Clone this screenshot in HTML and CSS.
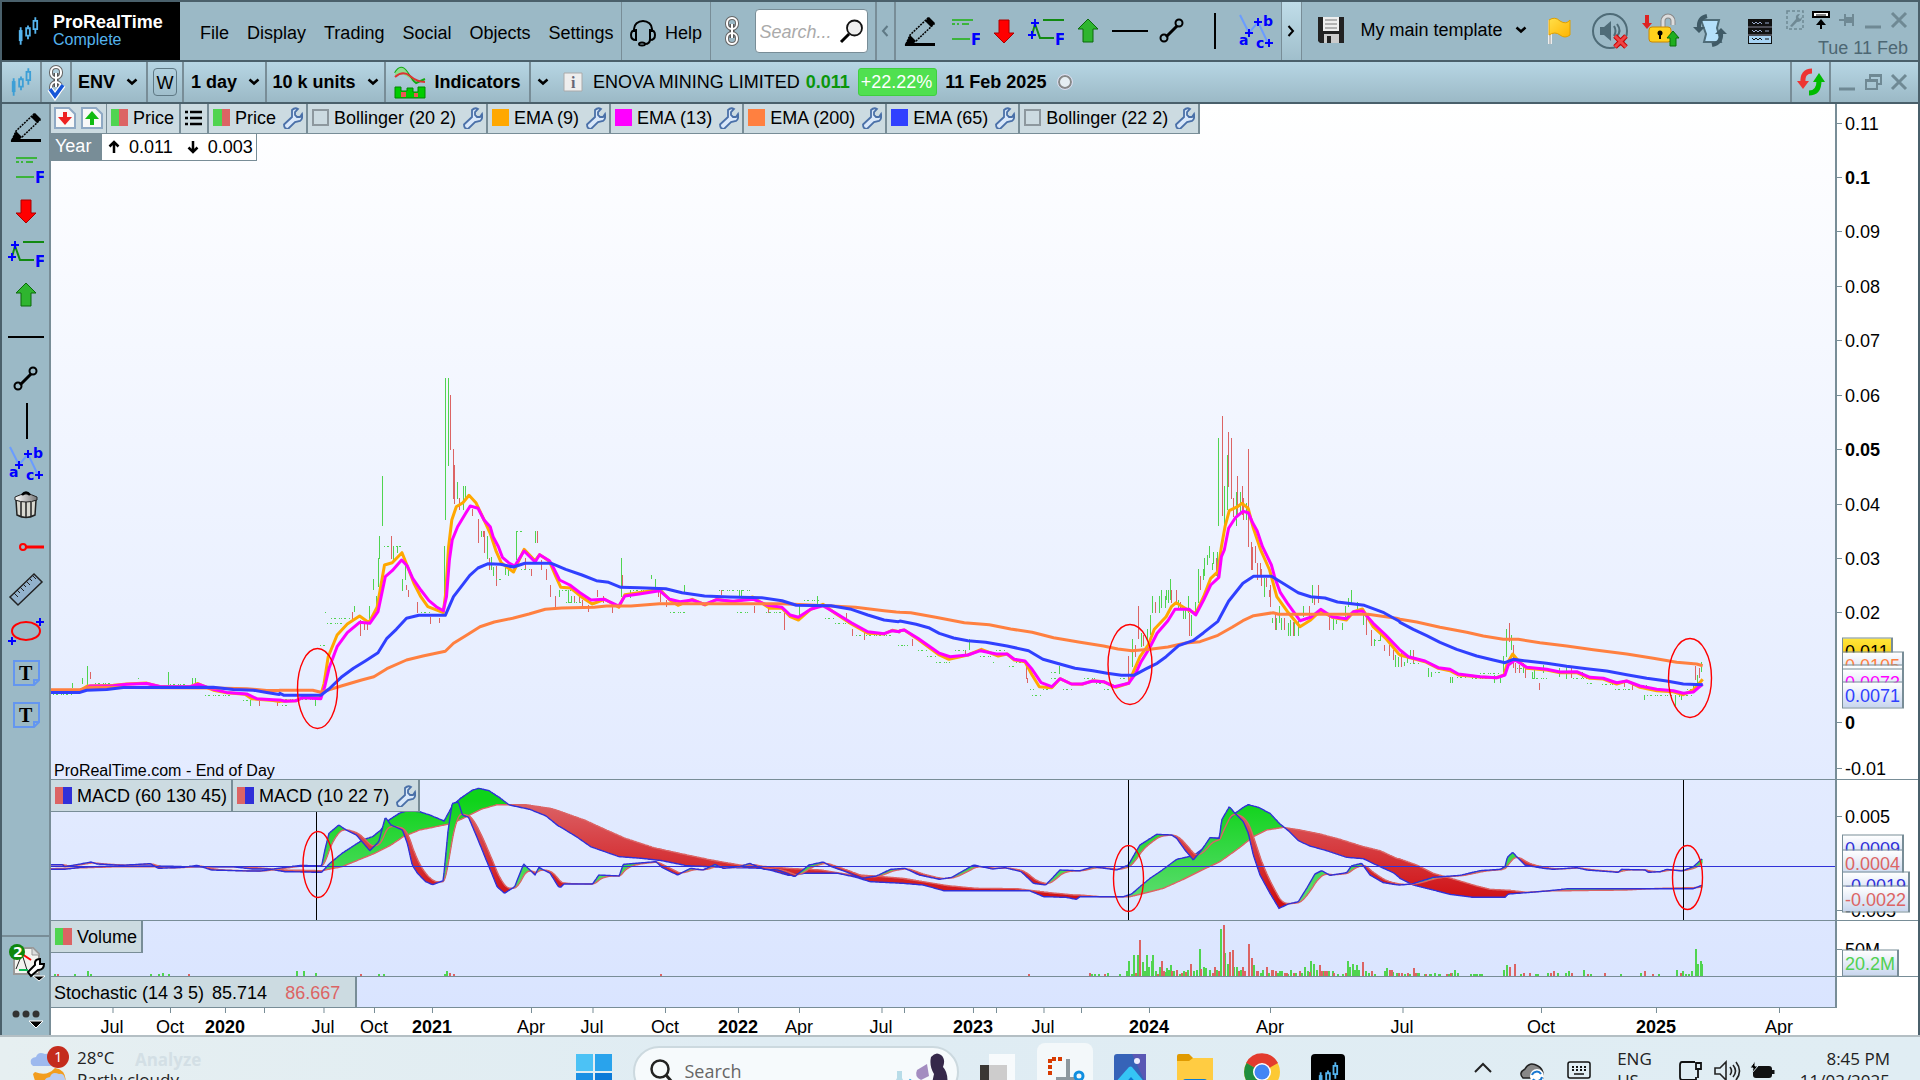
FILE: index.html
```html
<!DOCTYPE html>
<html lang="en">
<head>
<meta charset="utf-8">
<title>ProRealTime Complete</title>
<link rel="stylesheet" href="styles.css">
</head>
<body>
<svg class="sprite" aria-hidden="true">
  <defs>
    <linearGradient id="gSteel" x1="0" x2="1"><stop offset="0" stop-color="#fff"/><stop offset="1" stop-color="#777"/></linearGradient>
    <linearGradient id="gFlag" x1="0" x2="1" y2="1"><stop offset="0" stop-color="#ffe04a"/><stop offset="1" stop-color="#ffb400"/></linearGradient>
  </defs>
  <symbol id="candles" viewBox="0 0 24 30"><path d="M4 11v19M12 9v15M20 0v18" stroke="currentColor" stroke-width="2"/><path d="M2 14h4v12H2z" fill="currentColor"/><path d="M10 12h4v8h-4zM18 4h4v9h-4z" fill="var(--hole)" stroke="currentColor" stroke-width="2"/></symbol>
  <symbol id="pencil" viewBox="0 0 36 36"><path d="M4 31 8 22 26 5l6 6-18 17z" fill="none" stroke="#000" stroke-dasharray="2 1" stroke-width="1.5"/><path d="m23 8 4-4 6 6-4 4zM3 32l5-10 6 6-2 2h21v3H3z"/></symbol>
  <symbol id="fibo" viewBox="0 0 36 36"><path d="M8 7h21M8 11h3M18 11h7M13 11h2M8 26h18" stroke="#3cb43c" stroke-width="2"/><text x="27" y="32" class="glyph">F</text></symbol>
  <symbol id="arrow-down" viewBox="0 0 36 36"><path d="M13 7h10v13h5l-10 10L8 20h5z" fill="#f00" stroke="#a00"/></symbol>
  <symbol id="fibo-ext" viewBox="0 0 36 36"><path d="M15 7h21M4 22l3-11 5 14h14" fill="none" stroke="#128a12" stroke-width="2"/><path d="M3 10h8M7 6v8M0 22h8M4 18v8" stroke="#00f" stroke-width="2"/><text x="27" y="32" class="glyph">F</text></symbol>
  <symbol id="arrow-up" viewBox="0 0 36 36"><path d="M13 29h10V16h5L18 6 8 16h5z" fill="#2fb52f" stroke="#0a6a0a"/></symbol>
  <symbol id="hline" viewBox="0 0 36 36"><path d="M0 18h36" stroke="#000" stroke-width="2"/></symbol>
  <symbol id="segment" viewBox="0 0 36 36"><path d="m12 24 11-11" stroke="#000" stroke-width="3"/><circle cx="10" cy="25" r="3.5" fill="none" stroke="#000" stroke-width="2"/><circle cx="25" cy="10" r="3.5" fill="none" stroke="#000" stroke-width="2"/></symbol>
  <symbol id="vline" viewBox="0 0 36 36"><path d="M19 0v36" stroke="#000" stroke-width="2"/></symbol>
  <symbol id="waves" viewBox="0 0 36 36"><path d="m2 2 9 18 9-11 10 21" fill="none" stroke="#6a9cff" stroke-width="2"/><path d="M7 20h8M11 16v8M16 9h8M20 5v8M27 30h8M31 26v8" stroke="#00f" stroke-width="2"/><text x="1" y="32" class="glyph light">a</text><text x="25" y="13" class="glyph light">b</text><text x="18" y="35" class="glyph light">c</text></symbol>
  <symbol id="trash" viewBox="0 0 36 36"><path d="M8 13h20l-1 15q-9 5-18 0z" fill="#d8d8d0" stroke="#222" stroke-width="1.5"/><path d="M13 15v14M18 15v15M23 15v14" stroke="#222" stroke-width="1.5"/><path d="M7 10q11-6 22 0v3q-11 4-22 0z" fill="url(#gSteel)" stroke="#222"/><path d="M14 8q4-5 8 0" fill="none" stroke="#000" stroke-width="2.5"/></symbol>
  <symbol id="ray" viewBox="0 0 36 36"><path d="M18 18h18" stroke="#f00" stroke-width="3"/><circle cx="15" cy="18" r="3" fill="none" stroke="#f00" stroke-width="2"/></symbol>
  <symbol id="ruler" viewBox="0 0 36 36"><path d="M2 26 26 3l8 8-24 23z" fill="#92b2cc" stroke="#222" stroke-width="1.5"/><path d="m6 22 4 4m-1-7 3 3m0-6 4 4m-1-7 3 3m0-6 4 4m-1-7 3 3m0-6 4 4" stroke="#222"/></symbol>
  <symbol id="oval" viewBox="0 0 36 36"><ellipse cx="18" cy="18" rx="14" ry="9" fill="none" stroke="#f00" stroke-width="2"/><path d="M28 9h8M32 5v8M0 28h8M4 24v8" stroke="#00f" stroke-width="2"/></symbol>
  <symbol id="note" viewBox="0 0 36 36"><path d="M6 6h25v19l-5 5H6z" fill="none" stroke="#6496f0" stroke-width="2"/><path d="M26 30v-5h5" fill="none" stroke="#6496f0" stroke-width="2"/><text x="11" y="25" class="serif">T</text></symbol>
  <symbol id="wrench" viewBox="0 0 20 22"><path d="M1 17.500 9 10V3q3-3 6-1l-3 3v3l2 2h3l2-3q1 5-2 7l-5 1-7 7q-4 0-4-4.500z" fill="#d9e8fa" stroke="#4a70a8" stroke-width="1.800"/></symbol>
  <symbol id="chev" viewBox="0 0 12 8"><path d="m1.500 1.500 4.500 4 4.500-4" fill="none" stroke="#000" stroke-width="2.500"/></symbol>
  <symbol id="link" viewBox="0 0 16 30"><g fill="none"><rect x="3" y="2" width="10" height="11" rx="5" stroke="#666" stroke-width="4"/><rect x="3" y="17" width="10" height="11" rx="5" stroke="#666" stroke-width="4"/><path d="M8 8v14" stroke="#555" stroke-width="5"/><rect x="3" y="2" width="10" height="11" rx="5" stroke="#fff" stroke-width="2"/><rect x="3" y="17" width="10" height="11" rx="5" stroke="#fff" stroke-width="2"/><path d="M8 8v14" stroke="#fff" stroke-width="2"/></g></symbol>
  <symbol id="min" viewBox="0 0 18 20"><path d="M1 17h16" stroke="currentColor" stroke-width="3"/></symbol>
  <symbol id="close" viewBox="0 0 18 20"><path d="m2 3 14 14M16 3 2 17" stroke="currentColor" stroke-width="3"/></symbol>
</svg>

<header class="topbar">
  <div class="brand">
    <svg class="brand-mark"><use href="#candles"/></svg>
    <div><strong>ProRealTime</strong><span>Complete</span></div>
  </div>
  <nav class="menu">
    <button>File</button><button>Display</button><button>Trading</button><button>Social</button><button>Objects</button><button>Settings</button>
  </nav>
  <button class="help"><svg width="28" height="28" viewBox="0 0 28 28" fill="none" stroke="#000" stroke-width="2"><path d="M5 13V10a9 8 0 0 1 18 0v3M21 20q0 5-5 5"/><path d="M7 11q-5 0-5 5t5 5zM21 11q5 0 5 5t-5 5z"/><ellipse cx="13" cy="25" rx="3" ry="1.500"/></svg>Help</button>
  <div class="finder">
    <button aria-label="Link windows"><svg width="16" height="30"><use href="#link"/></svg></button>
    <label class="search"><input type="text" placeholder="Search..." aria-label="Search"><svg width="24" height="24" viewBox="0 0 24 24"><path d="m9 15-8 8" stroke="#000" stroke-width="3"/><circle cx="14.500" cy="9" r="7.500" fill="#eee" stroke="#111" stroke-width="1.800"/></svg></label>
  </div>
  <button class="slim" aria-label="Scroll left"><svg width="8" height="12" viewBox="0 0 8 12"><path d="M6.500 1 2 6l4.500 5" fill="none" stroke="#5f7985" stroke-width="2"/></svg></button>
  <div class="tools">
    <button aria-label="Draw"><svg><use href="#pencil"/></svg></button>
    <button aria-label="Fibonacci"><svg><use href="#fibo"/></svg></button>
    <button aria-label="Down arrow"><svg><use href="#arrow-down"/></svg></button>
    <button aria-label="Fibonacci extension"><svg><use href="#fibo-ext"/></svg></button>
    <button aria-label="Up arrow"><svg><use href="#arrow-up"/></svg></button>
    <button aria-label="Horizontal line"><svg><use href="#hline"/></svg></button>
    <button aria-label="Segment"><svg><use href="#segment"/></svg></button>
    <button aria-label="Vertical line"><svg><use href="#vline"/></svg></button>
    <button aria-label="Waves"><svg><use href="#waves"/></svg></button>
  </div>
  <button class="slim lit" aria-label="Scroll right"><svg width="8" height="12" viewBox="0 0 8 12"><path d="m1.500 1 4.500 5-4.500 5" fill="none" stroke="#000" stroke-width="2"/></svg></button>
  <button class="template"><svg width="28" height="28" viewBox="0 0 28 28"><path d="M1 1h26v26H3l-2-2z" fill="#222"/><path d="M6 1h16v14H6z" fill="#eee"/><path d="M8 4h12M8 8h12M8 12h12" stroke="#777"/><path d="M7 18h15v9H7z" fill="#ccc"/><path d="M10 20h4v7h-4z" fill="#222"/></svg>My main template<svg class="chev"><use href="#chev"/></svg></button>
  <div class="status">
    <button aria-label="Flag"><svg width="28" height="28" viewBox="0 0 28 28"><path d="M4 3v24" stroke="#eee" stroke-width="4"/><path d="M4 3v24" stroke="#999"/><path d="M3 3q6-4 11 1 6 4 10-1v15q-5 4-10 0-5-4-11 0z" fill="url(#gFlag)" stroke="#e0a000"/></svg></button>
    <button aria-label="Sound off"><svg width="38" height="38" viewBox="0 0 38 38"><circle cx="19" cy="19" r="17" fill="none" stroke="#4f6c78" stroke-width="2"/><path d="M9 15h4l7-6v20l-7-6H9z" fill="#4f6c78"/><path d="M23 14q3 5 0 10M26 12q5 7 0 12" fill="none" stroke="#4f6c78" stroke-width="2"/><path d="m24 24 11 11M35 24 24 35" stroke="#c00" stroke-width="5"/><path d="m24 24 11 11M35 24 24 35" stroke="#e44" stroke-width="3"/></svg></button>
    <button aria-label="Unlocked"><svg width="38" height="34" viewBox="0 0 38 34"><path d="M6 1v10" stroke="#d22" stroke-width="4"/><path d="m1 9 5 6 5-6z" fill="#d22"/><path d="M22 15V7a5 5 0 0 1 10 0v4" fill="none" stroke="#888" stroke-width="5"/><path d="M22 15V7a5 5 0 0 1 10 0v4" fill="none" stroke="#ddd" stroke-width="3"/><rect x="8" y="13" width="22" height="15" rx="3" fill="#ffd21c" stroke="#c80"/><circle cx="19" cy="19" r="2.500"/><path d="M19 19v6" stroke="#000" stroke-width="2"/><path d="m32 17-6 7h3v8h6v-8h3z" fill="#1fae1f" stroke="#087008"/></svg></button>
    <button aria-label="Synchronise"><svg width="36" height="34" viewBox="0 0 36 34"><path d="M9 6h18l-2 8 4 14H12l2-8z" fill="#b5e0fa" stroke="#4f6c78" stroke-width="2"/><path d="M7 14Q6 4 15 2M29 19q1 10-9 12" fill="none" stroke="#3f5a66" stroke-width="4"/><path d="M1 13h12l-6 6zM23 20h12l-6-6z" fill="#3f5a66"/></svg></button>
    <button aria-label="Servers"><svg width="24" height="27" viewBox="0 0 24 27"><path d="M0 1h24v25H0z" fill="#111"/><path d="M1 18h22v7H1z" fill="#a8d4f4"/><path d="M0 9h24M0 17h24" stroke="#889"/><path d="m4 4 2 2 2-2 2 2 2-2 2 2M4 12l2 2 2-2 2 2 2-2 2 2M17 5h4M17 13h4" fill="none" stroke="#9ac"/><path d="m4 20 2 2 2-2 2 2 2-2 2 2M17 21h4" fill="none" stroke="#111"/></svg></button>
  </div>
  <div class="window-box">
    <div class="window-buttons">
      <button aria-label="Customise"><svg viewBox="0 0 18 20"><path d="M1 1h16v18H1z" fill="none" stroke="#6f8994" stroke-width="1.500" stroke-dasharray="3 2"/><path d="m4 16 6-7q-1-5 4-5l-2 3 2 2 2-2q0 5-5 5l-5 5z" fill="#6f8994"/></svg></button>
      <button aria-label="Dock"><svg viewBox="0 0 18 20"><path d="M1 2h16v5H1z" fill="#fff" stroke="#000" stroke-width="2"/><path d="M4 5h10" stroke="#000"/><path d="m9 9-5 6h4v4h2v-4h4z"/></svg></button>
      <button aria-label="Pin"><svg viewBox="0 0 18 20"><path d="M1 10h6M7 4v12M15 4v12" stroke="currentColor" stroke-width="2"/><path d="M7 7h8v6H7z" fill="currentColor"/></svg></button>
      <button aria-label="Minimise"><svg><use href="#min"/></svg></button>
      <button aria-label="Close"><svg><use href="#close"/></svg></button>
    </div>
    <span class="today">Tue 11 Feb</span>
  </div>
</header>

<div class="chartbar">
  <button class="cell c-mark" aria-label="Chart"><svg class="brand-mark"><use href="#candles"/></svg></button>
  <button class="cell c-link" aria-label="Linked"><svg width="20" height="34" viewBox="0 0 20 34"><use href="#link" x="2" y="0" width="16" height="30"/><path d="m4 24 5 7 8-11" fill="none" stroke="#fff" stroke-width="6"/><path d="m4 24 5 7 8-11" fill="none" stroke="#1656d8" stroke-width="3.500"/></svg></button>
  <button class="cell c-code">ENV<svg class="chev"><use href="#chev"/></svg></button>
  <button class="cell c-week"><span>W</span></button>
  <button class="cell c-day">1 day<svg class="chev"><use href="#chev"/></svg></button>
  <button class="cell c-units">10 k units<svg class="chev"><use href="#chev"/></svg></button>
  <button class="cell c-ind"><svg width="32" height="34" viewBox="0 0 32 34"><path d="M1 8Q7-2 13 7t9 11l9-4" fill="none" stroke="#1a1" stroke-width="2"/><path d="M1 8Q7-2 13 7l6 10Q9 5 1 12z" fill="#8fdc8f"/><path d="M1 12q8-7 15-1t15 6" fill="none" stroke="#d33" stroke-width="2"/><path d="M1 33V22h6v4h6v-3h6v4h5v-5h7v11z" fill="#0c0" stroke="#080"/><path d="M7 27h5v5H7zM20 28h4v4h-4z" fill="#e55"/></svg>Indicators</button>
  <button class="cell c-more" aria-label="More"><svg class="chev"><use href="#chev"/></svg></button>
  <div class="instrument">
    <svg width="20" height="20" viewBox="0 0 20 20"><path d="M1 1h18v18H1z" fill="#eee" stroke="#aaa"/><text x="8" y="16" class="info">i</text></svg>
    <span class="name">ENOVA MINING LIMITED</span>
    <b class="up">0.011</b>
    <span class="badge">+22.22%</span>
    <b>11 Feb 2025</b>
    <span class="dot"></span>
  </div>
  <button class="cell c-sync" aria-label="Reload"><svg width="30" height="28" viewBox="0 0 30 28"><path d="M16 3Q6 3 7 15" fill="none" stroke="#e33" stroke-width="5"/><path d="M1 13h12l-6 8z" fill="#e33"/><path d="M13 25q10 0 10-12" fill="none" stroke="#0b0" stroke-width="5"/><path d="M17 14h12l-6-9z" fill="#0b0"/></svg></button>
  <div class="window-buttons wide">
    <button aria-label="Minimise chart"><svg><use href="#min"/></svg></button>
    <button aria-label="Restore chart"><svg viewBox="0 0 18 20"><path d="M2 8h11v9H2zM6 8V3h11v9h-4M6 4h11M2 9h11" fill="none" stroke="currentColor" stroke-width="2"/></svg></button>
    <button aria-label="Close chart"><svg><use href="#close"/></svg></button>
  </div>
</div>

<div class="workspace">
  <aside class="sidebar">
    <div class="side-tools">
      <button aria-label="Draw"><svg><use href="#pencil"/></svg></button>
      <button aria-label="Fibonacci"><svg><use href="#fibo"/></svg></button>
      <button aria-label="Down arrow"><svg><use href="#arrow-down"/></svg></button>
      <button aria-label="Fibonacci extension"><svg><use href="#fibo-ext"/></svg></button>
      <button aria-label="Up arrow"><svg><use href="#arrow-up"/></svg></button>
      <button aria-label="Horizontal line"><svg><use href="#hline"/></svg></button>
      <button aria-label="Segment"><svg><use href="#segment"/></svg></button>
      <button aria-label="Vertical line"><svg><use href="#vline"/></svg></button>
      <button aria-label="Waves"><svg><use href="#waves"/></svg></button>
      <button aria-label="Delete"><svg><use href="#trash"/></svg></button>
      <button aria-label="Ray"><svg><use href="#ray"/></svg></button>
      <button aria-label="Ruler"><svg><use href="#ruler"/></svg></button>
      <button aria-label="Ellipse"><svg><use href="#oval"/></svg></button>
      <button aria-label="Text"><svg><use href="#note"/></svg></button>
      <button aria-label="Text note"><svg><use href="#note"/></svg></button>
    </div>
    <div class="side-bottom">
      <button aria-label="Object list"><svg width="36" height="38" viewBox="0 0 36 38"><path d="M6 4h19l6 6v20H6z" fill="#f4f4f0" stroke="#999" stroke-width="2"/><path d="M24 4v7h7" fill="#ddd" stroke="#999"/><path d="m8 25 6-15 5 16" fill="none" stroke="#222"/><path d="m14 10 9 6" stroke="#f00" stroke-width="2"/><path d="M11 26h9" stroke="#1b5" stroke-width="2"/><path d="m20 28 7-7q-1-6 5-6v5h4q0 6-6 6l-7 6z" fill="#fff" stroke="#000" stroke-width="2"/><path d="M25 32h12l-6 5z" stroke="#fff"/><circle cx="9" cy="8" r="8" fill="#0d870d"/><text x="5" y="13" class="count">2</text></svg></button>
      <button aria-label="More tools"><svg width="32" height="20" viewBox="0 0 32 20"><g fill="#333"><circle cx="6" cy="5" r="3.500"/><circle cx="16" cy="5" r="3.500"/><circle cx="26" cy="5" r="3.500"/></g><path d="M19 12h14l-7 7z" stroke="#fff"/></svg></button>
    </div>
  </aside>

  <main class="chart">
    <section class="panel price">
      <div class="plot">
        <svg id="price" viewBox="51 104 1784 675" preserveAspectRatio="none"></svg>
        <div class="legend">
          <span class="item tight"><svg width="22" height="22" viewBox="0 0 22 22"><path d="M1 1h14l6 6v14H1z" fill="#f8f8f8" stroke="#8fa9c4" stroke-width="2"/><path d="M11 5v6" stroke="#e22" stroke-width="4"/><path d="M4 10h14l-7 8z" fill="#e22"/></svg><svg width="22" height="22" viewBox="0 0 22 22"><path d="M1 1h14l6 6v14H1z" fill="#f8f8f8" stroke="#8fa9c4" stroke-width="2"/><path d="M11 11v7" stroke="#1b1" stroke-width="4"/><path d="M4 12h14l-7-8z" fill="#1b1"/></svg></span>
          <span class="item"><i class="sw duo"></i>Price</span>
          <span class="item"><svg width="17" height="16" viewBox="0 0 17 16"><path d="M0 2h3M0 8h3M0 14h3M5 2h12M5 8h12M5 14h12" stroke="#000" stroke-width="2.500"/></svg></span>
          <span class="item"><i class="sw duo"></i>Price<svg class="wr"><use href="#wrench"/></svg></span>
          <span class="item"><i class="sw box"></i>Bollinger (20 2)<svg class="wr"><use href="#wrench"/></svg></span>
          <span class="item"><i class="sw ema9"></i>EMA (9)<svg class="wr"><use href="#wrench"/></svg></span>
          <span class="item"><i class="sw ema13"></i>EMA (13)<svg class="wr"><use href="#wrench"/></svg></span>
          <span class="item"><i class="sw ema200"></i>EMA (200)<svg class="wr"><use href="#wrench"/></svg></span>
          <span class="item"><i class="sw ema65"></i>EMA (65)<svg class="wr"><use href="#wrench"/></svg></span>
          <span class="item"><i class="sw box"></i>Bollinger (22 2)<svg class="wr"><use href="#wrench"/></svg></span>
        </div>
        <div class="year"><span class="year-name">Year</span><span class="year-range"><svg width="12" height="14" viewBox="0 0 12 14"><path d="M6 13V2M1.500 6.500 6 2l4.500 4.500" fill="none" stroke="#000" stroke-width="2.500"/></svg>0.011<svg width="12" height="14" viewBox="0 0 12 14"><path d="M6 1v11M1.500 7.500 6 12l4.500-4.500" fill="none" stroke="#000" stroke-width="2.500"/></svg>0.003</span></div>
        <span class="source">ProRealTime.com - End of Day</span>
      </div>
      <div class="axis">
        <span class="lab" style="--y:124">0.11</span><span class="lab b" style="--y:178">0.1</span><span class="lab" style="--y:232">0.09</span><span class="lab" style="--y:287">0.08</span><span class="lab" style="--y:341">0.07</span><span class="lab" style="--y:396">0.06</span><span class="lab b" style="--y:450">0.05</span><span class="lab" style="--y:505">0.04</span><span class="lab" style="--y:559">0.03</span><span class="lab" style="--y:613">0.02</span><span class="lab b" style="--y:723">0</span><span class="lab" style="--y:769">-0.01</span>
        <span class="tag gold" style="--y:651">0.011</span><span class="tag t200" style="--y:665">0.0105</span><span class="tag t9" style="--y:678">0.0075</span><span class="tag t13" style="--y:682">0.0073</span><span class="tag t65" style="--y:695">0.0071</span>
      </div>
    </section>
    <section class="panel macd">
      <div class="plot">
        <svg id="macd" viewBox="51 780 1784 140" preserveAspectRatio="none">
          <defs>
            <linearGradient id="gUp" gradientUnits="userSpaceOnUse" x1="0" y1="800" x2="0" y2="900"><stop offset="0" stop-color="#0fd31a"/><stop offset="1" stop-color="#5cdc70"/></linearGradient>
            <linearGradient id="gDown" gradientUnits="userSpaceOnUse" x1="0" y1="800" x2="0" y2="900"><stop offset="0" stop-color="#dc6468"/><stop offset="1" stop-color="#d01014"/></linearGradient>
          </defs>
        </svg>
        <div class="legend"><span class="item"><i class="sw duo-m"></i>MACD (60 130 45)</span><span class="item"><i class="sw duo-m"></i>MACD (10 22 7)<svg class="wr"><use href="#wrench"/></svg></span></div>
      </div>
      <div class="axis">
        <span class="lab" style="--y:817">0.005</span><span class="lab" style="--y:911">-0.005</span>
        <span class="tag tm" style="--y:848">0.0009</span><span class="tag ts" style="--y:863">0.0004</span><span class="tag tm" style="--y:885">-0.0019</span><span class="tag ts" style="--y:899">-0.0022</span>
      </div>
    </section>
    <section class="panel volume">
      <div class="plot">
        <svg id="volume" viewBox="51 921 1784 55" preserveAspectRatio="none"></svg>
        <div class="legend"><span class="item"><i class="sw duo"></i>Volume</span></div>
      </div>
      <div class="axis"><span class="lab" style="--y:950">50M</span><span class="tag tv" style="--y:963">20.2M</span></div>
    </section>
    <section class="panel stoch">
      <div class="plot"><div class="readout"><span>Stochastic (14 3 5)</span><span>85.714</span><span class="red">86.667</span></div></div>
      <div class="axis"></div>
    </section>
    <div class="timeline">
      <span style="--x:112">Jul</span><span style="--x:170">Oct</span><span class="b" style="--x:225">2020</span><span style="--x:264"></span><span style="--x:323">Jul</span><span style="--x:374">Oct</span><span class="b" style="--x:432">2021</span><span style="--x:531">Apr</span><span style="--x:592">Jul</span><span style="--x:665">Oct</span><span class="b" style="--x:738">2022</span><span style="--x:799">Apr</span><span style="--x:881">Jul</span><span style="--x:904"></span><span class="b" style="--x:973">2023</span><span style="--x:996"></span><span style="--x:1043">Jul</span><span style="--x:1081"></span><span class="b" style="--x:1149">2024</span><span style="--x:1270">Apr</span><span style="--x:1402">Jul</span><span style="--x:1541">Oct</span><span class="b" style="--x:1656">2025</span><span style="--x:1779">Apr</span>
    </div>
  </main>
</div>

<footer class="taskbar">
  <div class="weather">
    <svg width="46" height="44" viewBox="0 0 46 44"><path d="M8 26q12 5 20-4 14 2 10 22H12Q8 36 6 28z" fill="#f29d1e"/><path d="M4 18q-2-6 5-7 2-6 9-3 5-1 6 5 5 4 0 7H6z" fill="#9db9ee"/><path d="M18 38q-2-6 5-7 2-6 9-3 5-1 6 5 5 4 0 8H20z" fill="#b9cdf3"/><circle cx="31" cy="11" r="11" fill="#c42b1c"/><text x="27" y="16" class="alert">1</text></svg>
    <div class="weather-text"><span>28°C</span><span>Partly cloudy</span></div>
    <span class="ghost">Analyze</span>
  </div>
  <div class="apps">
    <button aria-label="Start"><svg width="36" height="36" viewBox="0 0 36 36"><path d="M0 0h17v17H0z" fill="#4cc2f5"/><path d="M19 0h17v17H19z" fill="#29a3ec"/><path d="M0 19h17v17H0z" fill="#1b90e4"/><path d="M19 19h17v17H19z" fill="#0a7ad8"/></svg></button>
    <label class="task-search"><svg width="24" height="26" viewBox="0 0 24 26"><circle cx="11" cy="11" r="8.500" fill="none" stroke="#222" stroke-width="2.500"/><path d="m17 17 6 7" stroke="#222" stroke-width="3"/></svg><input type="text" placeholder="Search" aria-label="Search the taskbar"><svg width="60" height="36" viewBox="0 0 60 36"><path d="M6 19h5v7l5 10H1l5-10z" fill="#b8dce8"/><path d="m26 18 10-6 2 12-8 4q-7-3-4-10z" fill="#a38cc0"/><path d="m18 28 6 4" stroke="#2aa0e0" stroke-width="3"/><path d="M40 5q5-6 10-2 5 4 2 12 6 6 4 21H40l3-14q-5-8-3-17z" fill="#35284a"/></svg></label>
    <button aria-label="Task view"><svg width="36" height="36" viewBox="0 0 36 36"><path d="M0 11h27v25H0z" fill="#3a3734"/><path d="M9 0h26v28H9z" fill="#fff" opacity=".75"/></svg></button>
    <button class="active" aria-label="Snipping tool"><svg width="38" height="36" viewBox="0 0 38 36"><path d="M22 4v20M10 24h20" stroke="#8d989e" stroke-width="4"/><path d="M4 20V4h14" fill="none" stroke="#d83b01" stroke-width="4" stroke-dasharray="4 2"/><circle cx="33" cy="21" r="4" fill="none" stroke="#0f8fe0" stroke-width="3"/><circle cx="22" cy="34" r="4" fill="none" stroke="#0f8fe0" stroke-width="3"/></svg></button>
    <button aria-label="Photos"><svg width="32" height="36" viewBox="0 0 32 36"><rect width="32" height="38" rx="3" fill="#3663b8"/><path d="M18 0h14v30z" fill="#5a58b4"/><path d="m0 30 15-17q2-1 3 0l14 17v6H0z" fill="#35c5f5"/><path d="m5 36 12-13 12 13z" fill="#0c77cf"/><circle cx="23" cy="7" r="3" fill="#eef"/></svg></button>
    <button aria-label="Files"><svg width="36" height="36" viewBox="0 0 36 36"><path d="M0 2q0-2 2-2h10l4 4h18q2 0 2 3H0z" fill="#e09a00"/><path d="M0 7h12l4-3h20v32H0z" fill="#ffcc42"/><path d="M6 36v-9q0-2 3-2h18q3 0 3 2v9z" fill="#0a7bd4"/></svg></button>
    <button aria-label="Browser"><svg width="36" height="36" viewBox="0 0 36 36"><circle cx="18" cy="18" r="18" fill="#fcc934"/><path d="M18 18 2 9a18 18 0 0 1 32 0z" fill="#e33b2e"/><path d="M18 18 2.500 9A18 18 0 0 0 17 36l8-14z" fill="#1e8e3e"/><circle cx="18" cy="18" r="9" fill="#fff"/><circle cx="18" cy="18" r="7.500" fill="#4285f4"/></svg></button>
    <button class="prt" aria-label="ProRealTime"><svg width="22" height="28"><use href="#candles"/></svg></button>
  </div>
  <div class="tray">
    <svg width="18" height="12" viewBox="0 0 18 12"><path d="m1 11 8-8 8 8" fill="none" stroke="#222" stroke-width="2"/></svg>
    <svg width="26" height="20" viewBox="0 0 26 20"><path d="M4 17q-5-5 2-9 4-8 13-3 6 3 5 12z" fill="#888" stroke="#222" stroke-width="1.500"/><circle cx="18" cy="15" r="7" fill="#fff"/><path d="M13 14a5 5 0 0 1 9-1M23 16a5 5 0 0 1-9 2" fill="none" stroke="#1a78d0" stroke-width="2"/></svg>
    <svg width="24" height="18" viewBox="0 0 24 18"><rect x="1" y="1" width="22" height="16" rx="2" fill="none" stroke="#111" stroke-width="1.500"/><path d="M5 6h14M5 9h14" stroke="#111" stroke-width="2" stroke-dasharray="2 2"/><path d="M7 13h10" stroke="#111" stroke-width="1.500"/></svg>
    <span class="lang"><span>ENG</span><span>US</span></span>
    <svg width="26" height="22" viewBox="0 0 26 22"><path d="M17 1H4Q2 1 2 4v12q0 3 2 3h14v-3M8 19v3M16 19v3M18 2h5v6h-5zM20 8v9" fill="none" stroke="#111" stroke-width="1.800"/></svg>
    <svg width="26" height="20" viewBox="0 0 26 20"><path d="M1 7h5l6-6v18l-6-6H1zM16 6q3 4 0 8M19 4q5 6 0 12M22 1q7 9 0 18" fill="none" stroke="#222" stroke-width="1.600"/></svg>
    <svg width="26" height="20" viewBox="0 0 26 20"><rect x="3" y="5" width="19" height="12" rx="3" fill="#111"/><path d="M23 9v4" stroke="#111" stroke-width="3"/><path d="M5 0 0 7h3l-1 5 6-7H5z" stroke="#e0edf3"/></svg>
    <span class="clock"><span>8:45 PM</span><span>11/02/2025</span></span>
  </div>
</footer>
<script src="chart.js"></script>
</body>
</html>
```
FILE: styles.css
```css
* { box-sizing: border-box; }
:root {
  --steel: #9bb9c6;
  --edge: #4a606b;
  --line: #788d97;
  --pane: #ccdbe1;
}
body {
  margin: 0;
  height: 100vh;
  display: flex;
  flex-direction: column;
  overflow: hidden;
  font: 18px/22px "Liberation Sans", Arial, sans-serif;
  color: #000;
  background: var(--steel);
  white-space: nowrap;
}
button { font: inherit; color: inherit; background: none; border: 0; padding: 0; display: flex; align-items: center; justify-content: center; }
svg { display: block; flex: none; overflow: visible; }
.sprite { position: absolute; width: 0; height: 0; }
.glyph { font: bold 15px "DejaVu Sans", sans-serif; fill: #00f; }
.light { font-size: 14px; }
.serif { font: bold 20px "Liberation Serif", serif; }
.info { font: bold 16px "Liberation Serif", serif; fill: #667; }
.count { font: bold 14px "DejaVu Sans", sans-serif; fill: #fff; }
.alert { font: 15px "Open Sans", sans-serif; fill: #fff; }
.chev { width: 12px; height: 8px; }
.b { font-weight: bold; }

/* main toolbar */
.topbar { display: flex; height: 62px; flex: none; border: 2px solid var(--edge); }
.brand { width: 178px; background: #000; display: flex; align-items: center; gap: 14px; padding-left: 15px; color: #fff; line-height: 18px; }
.brand-mark { width: 22px; height: 28px; color: #3d9fd6; --hole: #a8cad9; }
.brand .brand-mark { color: #55b4ee; --hole: #000; }
.brand strong, .brand span { display: block; }
.brand span { font-size: 16px; color: #55b4ee; }
.menu { display: flex; gap: 18px; padding: 4px 7px 0 20px; }
.help { gap: 8px; width: 90px; border: 1px solid var(--line); border-width: 0 1px; padding-top: 4px; }
.finder { display: flex; align-items: center; gap: 15px; padding: 0 7px 0 13px; }
.search { display: flex; align-items: center; width: 113px; height: 44px; background: #fff; border: 1px solid var(--line); border-radius: 4px; padding: 0 4px; }
.search input { width: 80px; border: 0; padding: 2px 0 0; background: none; font: italic 18px "Liberation Sans", sans-serif; }
.search input::placeholder { color: #aaa; }
.slim { width: 21px; flex: none; border: 1px solid var(--line); border-width: 0 2px; }
.lit { background: linear-gradient(#c0dde9, #a0bfcc); border-width: 0 1px; }
.tools { display: flex; padding: 0 4px 0 3px; }
.tools button { width: 42px; }
.tools svg, .side-tools svg { width: 36px; height: 36px; }
.template { gap: 16px; padding: 0 0 2px 15px; margin-right: 14px; }
.template .chev { margin-left: -4px; }
.status { display: flex; gap: 12px; align-items: center; }
.status button { width: 38px; }
.window-box { margin-left: auto; padding: 8px 10px 0 0; color: #4d6773; display: flex; flex-direction: column; align-items: flex-end; gap: 8px; line-height: 20px; }
.window-buttons { display: flex; gap: 8px; align-items: center; color: #6f8994; }
.window-buttons svg { width: 18px; height: 20px; }

/* chart toolbar */
.chartbar { display: flex; height: 42px; flex: none; border: 2px solid var(--edge); border-top: 0; background: linear-gradient(#b7d6e4, #9bb9c6); font-weight: bold; }
.cell { border-right: 2px solid var(--line); gap: 11px; }
.c-mark { width: 40px; }
.c-link { width: 30px; }
.c-code { width: 76px; padding-right: 2px; }
.c-week { width: 36px; font-weight: normal; }
.c-week span { width: 24px; height: 28px; line-height: 29px; border: 1px solid #5f7985; border-radius: 4px; }
.c-day { width: 83px; padding-left: 2px; }
.c-units { width: 119px; }
.c-ind { width: 145px; gap: 8px; }
.c-more { width: 32px; border: 0; padding-right: 8px; }
.instrument { display: flex; align-items: center; gap: 8px; font-weight: normal; margin-right: auto; }
.name { padding-left: 2px; margin-right: -2px; }
.up { color: #0a960a; }
.badge { height: 28px; line-height: 26px; padding: 0 4px 0 2px; background: #50e050; border: 1px solid #3fcf3f; border-radius: 3px; color: #fff; }
.dot { width: 14px; height: 14px; border: 2px solid #888; outline: 1px solid #dde; border-radius: 50%; background: #e6eef2; margin-left: 4px; }
.c-sync { width: 41px; border-left: 2px solid var(--line); }
.wide { padding: 0 10px 0 7px; }

/* side toolbar */
.workspace { flex: 1; min-height: 0; display: grid; grid-template-columns: 51px 1fr; border-right: 2px solid var(--edge); }
.sidebar { display: flex; flex-direction: column; justify-content: space-between; border: 1px solid var(--edge); border-width: 0 0 0 2px; border-right: 2px solid var(--line); }
.side-tools { display: flex; flex-direction: column; padding-top: 2px; align-items: center; }
.side-tools button { height: 42px; }
.side-bottom { height: 100px; border-top: 2px solid var(--line); padding: 7px 0 6px; display: flex; flex-direction: column; align-items: center; justify-content: space-between; }

/* chart panels */
.chart { display: grid; grid-template-rows: 1fr 141px 56px 31px 27px; min-height: 0; min-width: 0; background: linear-gradient(#fff, #d9e4ff 98%); }
.panel { display: grid; grid-template-columns: 1fr 83px; min-height: 0; border-bottom: 1px solid var(--line); }
.plot { position: relative; min-width: 0; }
.plot > svg { position: absolute; inset: 0; width: 100%; height: 100%; }
.axis { position: relative; overflow: hidden; background: #fff; border-left: 2px solid var(--line); }
.price { --top: 104; --span: 675; }
.macd { --top: 780; --span: 140; }
.volume { --top: 921; --span: 55; }
.lab, .tag { position: absolute; top: calc((var(--y) - var(--top)) / var(--span) * 100%); transform: translateY(-50%); }
.lab { left: 8px; }
.lab::before { content: ""; position: absolute; left: -8px; top: 10px; width: 5px; height: 1px; background: var(--line); }
.tag { left: 5px; height: 27px; line-height: 27px; padding: 0 2px; border: 1px solid var(--line); border-width: 1px 2px 1px 1px; background: linear-gradient(#fff, #c8d6ee); }
.gold { background: linear-gradient(#ffe53a, #f5c400); }
.t200 { color: #ff8040; }
.t9 { color: #ffa800; }
.t13 { color: #f0f; }
.t65 { color: #3040ff; }
.tm { color: #3030d8; }
.ts { color: #dc6464; }
.tv { color: #50d050; }
.legend { position: relative; display: flex; width: max-content; height: 30px; background: var(--pane); border-bottom: 1px solid var(--line); }
.item { display: flex; align-items: center; gap: 5px; padding: 0 5px 2px 4px; border-right: 2px solid var(--line); }
.macd .legend, .volume .legend { height: 32px; }
.macd .item, .volume .item { padding: 0 4px 0 4px; }
.tight { padding: 0 3px 2px; border-width: 1px; }
.sw { width: 17px; height: 17px; }
.duo { background: linear-gradient(90deg, #50d450 50%, #dc6464 50%); }
.duo-m { background: linear-gradient(90deg, #dc6464 50%, #3030d8 50%); }
.box { border: 2px solid #8d989e; }
.ema9 { background: #ffa800; }
.ema13 { background: #f0f; }
.ema200 { background: #ff8040; }
.ema65 { background: #3040ff; }
.wr { width: 20px; height: 22px; margin: 0 -2px 0 2px; }
.year { position: relative; display: flex; width: max-content; height: 27px; line-height: 25px; }
.year-name { width: 51px; padding-left: 4px; background: var(--line); color: #fff; }
.year-range { display: flex; align-items: center; gap: 9px; padding: 0 3px 0 6px; background: #fff; border: 1px solid var(--line); border-width: 0 1px 1px 0; }
.year-range svg:nth-of-type(2) { margin-left: 5px; }
.source { position: absolute; left: 3px; bottom: -2px; font-size: 16px; line-height: 20px; }
.readout { display: flex; gap: 8px; width: 306px; height: 30px; line-height: 33px; padding-left: 3px; background: var(--pane); border-right: 2px solid var(--line); }
.red { color: #dc6464; margin-left: 10px; }
.stoch { border-bottom-width: 0; }
.stoch .plot { border-bottom: 2px solid var(--line); }
.timeline { position: relative; background: #fff; overflow: hidden; }
.timeline span { position: absolute; left: calc((var(--x) - 51) / 1867 * 100%); transform: translateX(-50%); padding-top: 8px; }
.timeline span::before { content: ""; position: absolute; left: 50%; top: 0; width: 1px; height: 5px; background: var(--line); }

/* desktop taskbar */
.taskbar { height: 45px; flex: none; overflow: hidden; display: grid; grid-template-columns: 1fr auto 1fr; border-top: 2px solid #b4bfc4; background: linear-gradient(90deg, #e6eff1, #dfecf3 40%, #e0edf3); font: 17px/22px "Open Sans", "Noto Sans", sans-serif; color: #222; }
.weather { display: flex; align-items: flex-start; padding: 9px 0 0 27px; gap: 4px; }
.weather-text span, .lang span, .clock span { display: block; }
.weather-text { padding-top: 1px; }
.ghost { font: bold 17px/24px "Open Sans", sans-serif; color: #d3dfe5; margin-left: -48px; padding-top: 2px; }
.apps { display: flex; align-items: flex-start; gap: 31px; height: 43px; padding-top: 17px; }
.task-search { display: flex; align-items: flex-start; width: 326px; height: 52px; margin: -8px -10px 0; padding: 10px 6px 0 14px; gap: 12px; border: 2px solid #ccd9df; border-radius: 26px; background: #f6fafc; }
.task-search input { flex: 1; min-width: 0; height: 26px; padding: 0; border: 0; background: none; font: 18px "Open Sans", sans-serif; }
.task-search input::placeholder { color: #666; }
.task-search svg:last-child { margin-top: -6px; }
.active { width: 56px; height: 60px; margin: -11px -10px 0; background: #f3f8fa; border-radius: 8px; }
.apps .prt { width: 34px; height: 36px; border-radius: 4px; background: #000; color: #55b4ee; --hole: #000; padding-top: 8px; }
.tray { display: flex; align-items: flex-start; justify-content: flex-end; gap: 10px; padding: 11px 30px 0 0; }
.tray svg { margin-top: 13px; }
.tray svg:nth-child(1) { margin-right: 17px; }
.tray svg:nth-child(2) { margin-right: 12px; }
.lang { margin: 0 16px; }
.clock { text-align: right; margin-left: 14px; }
```
FILE: chart.js
```js
const NS = 'http://www.w3.org/2000/svg';
const GREEN = '#50d450', RED = '#dc6464';

function add(id, tag, attrs) {
  const el = document.createElementNS(NS, tag);
  for (const k in attrs) el.setAttribute(k, attrs[k]);
  document.getElementById(id).appendChild(el);
}

// Each series is stored in segments; a segment frame is [x origin, y origin, x units per px, y units per px].
const F = {
  a: [0, 500, 3, 2.703], b: [280, 360, 2.45, 3], c: [900, 400, 2.8, 3], d: [1400, 600, 3, 3],
  m: [40, 770, 2.45, 3], n: [560, 770, 2.45, 3], o: [1080, 770, 3, 3]
};
const px = (f, x) => F[f][0] + x / F[f][2];
const py = (f, y) => F[f][1] + y / F[f][3];
function series(parts) {
  const out = [];
  for (const f in parts) {
    const n = parts[f].trim().split(/[\s,]+/).map(Number);
    for (let i = 0; i < n.length; i += 2) out.push([px(f, n[i]), py(f, n[i + 1])]);
  }
  return out;
}
const line = pts => 'M' + pts.map(p => p[0].toFixed(1) + ' ' + p[1].toFixed(1)).join('L');

/* price bars: x, high, low */
const bars = {
  up: {
    a: '262,449,500 218,495,508 248,482,498 506,465,500 578,482,498 586,482,496 751,540,556',
    b: '250,348,497 243,528,597 241,595,680 228,657,690 236,708,750 219,738,790 278,558,600 288,558,578 300,657,692 307,610,660 403,558,740 405,54,480 412,54,318 434,366,416 449,378,450 454,378,420 493,514,530 508,528,598 519,592,630 523,620,648 579,514,600 626,514,548 836,594,710 909,645,657 919,657,690 990,675,700 685,690,710 707,690,730 715,708,728 859,690,715 553,620,646 559,630,648 1130,690,712 1126,690,712 1272,738,768 1317,708,735 87,1010,1037 183,738,756',
    c: '893,114,378 908,258,378 917,165,330 942,276,378 954,276,345 970,310,360 866,438,475 852,474,528 849,507,540 860,465,495 877,456,492 874,490,510 835,507,610 890,456,530 707,588,640 726,588,640 732,570,625 743,588,625 757,537,600 752,570,610 746,570,600 701,645,705 692,688,720 650,717,800 676,700,740 781,600,625 807,588,640 800,630,656 816,645,707 827,606,640 793,630,656 1062,618,670 1055,655,690 1068,655,690 1093,660,708 1104,665,708 1117,660,708 1130,618,650 1155,555,610 1020,535,590 1264,570,610 1256,595,620 1248,618,650 1282,606,640 1213,655,690 1299,640,675 1043,654,670 1087,670,708 1223,660,672 1239,670,690 1328,718,738 1344,700,722 1388,766,800 1397,770,800 194,718,750 446,798,822',
    d: '320,87,170 333,105,150 13,185,198 30,150,178 23,175,190 86,205,232 95,215,232 150,230,250 157,232,250 310,168,215 403,200,237 370,190,220 396,215,237 733,285,300 827,285,318 845,285,300 838,272,290 880,255,275 905,185,215 891,225,258 478,205,232 548,215,235 430,195,218 500,200,237 283,225,250 302,225,250'
  },
  down: {
    a: '271,465,484 778,543,556 832,545,556',
    b: '417,105,270 425,267,416 427,315,432 440,414,450 471,446,468 486,478,548 498,514,530 501,514,578 513,594,630 530,618,678 272,528,597 309,675,690 315,690,711 337,726,758 368,770,792 391,773,790 196,780,828 178,756,776 207,785,810 214,790,810 631,514,548 601,594,630 616,628,648 640,600,630 653,628,660 662,675,710 675,708,740 721,708,728 740,720,740 734,708,726 838,645,680 778,690,712 792,708,728 814,740,758 755,735,757 927,690,710 932,695,725 946,720,740 1081,690,706 1162,738,760 1197,738,758 1236,760,810 1389,760,782 1402,808,828 1432,818,840',
    c: '903,48,348 919,96,260 928,114,297 933,294,350 944,228,350 959,258,345 961,294,360 975,147,441 984,426,510 995,438,490 987,440,510 1001,490,540 1009,488,530 1012,507,558 1026,535,560 1037,555,622 1034,570,590 841,528,570 886,474,528 760,570,610 773,570,610 715,606,640 668,618,718 682,706,738 659,735,770 639,768,850 810,640,708 786,606,630 1051,645,690 1076,655,690 1101,665,708 1171,555,610 1160,590,615 1146,618,655 1202,650,690 1306,655,706 1320,690,738 1356,735,752 1370,735,768 1381,750,780 354,790,838 357,833,850 35,718,738 183,750,765',
    d: '5,160,200 40,150,190 328,69,126 340,135,205 345,190,218 357,195,218 375,200,235 886,198,240 417,250,270 697,250,270 898,205,235 513,205,235 673,240,262'
  }
};
for (const side in bars) {
  let d = '';
  for (const f in bars[side]) for (const t of bars[side][f].split(' ')) {
    const [x, hi, lo] = t.split(',').map(Number);
    d += `M${Math.floor(px(f, x))}.5 ${py(f, hi).toFixed(0)}V${py(f, lo).toFixed(0)}`;
  }
  add('price', 'path', { d, stroke: side === 'up' ? GREEN : RED, 'stroke-width': 1, fill: 'none', 'shape-rendering': 'crispEdges' });
}

/* quiet sessions: from, to, level */
const quiet = {
  a: '160,215,527 285,330,497 414,418,483 510,560,499 615,700,528 730,745,541 845,950,540',
  b: '5,25,1036 98,112,856 110,116,757 125,175,775 115,160,790 255,270,559 283,298,559 580,597,514 590,612,627 345,370,757 530,545,657 690,720,690 700,745,727 865,905,690 955,1000,757 1075,1155,690 1120,1150,757 1190,1230,757 1285,1320,722 1335,1360,775 1360,1400,790 1410,1500,826 1515,1530,856',
  c: '10,22,736 50,75,751 75,100,769 100,140,787 155,190,751 225,260,769 270,295,751 260,268,787 305,320,799 325,350,787 370,398,886 365,375,868 400,420,868 424,442,817 424,460,835 455,482,868 515,548,835 550,600,850 570,600,868 615,638,835 1330,1345,720',
  d: '30,60,190 105,130,218 170,200,232 215,300,236 240,300,220 350,380,205 400,440,236 520,560,236 560,580,250 605,650,254 645,690,268 700,740,256 740,820,286 755,790,272 850,880,286 860,880,268'
};
let dq = '';
for (const f in quiet) for (const t of quiet[f].split(' ')) {
  const [x1, x2, y] = t.split(',').map(Number);
  dq += `M${px(f, x1).toFixed(0)} ${Math.floor(py(f, y))}.5H${px(f, x2).toFixed(0)}`;
}
add('price', 'path', { d: dq, stroke: GREEN, 'stroke-dasharray': '1 2 2 3 1 1', fill: 'none', 'shape-rendering': 'crispEdges' });

const ema9 = series({
  a: '153,520 235,518 262,503 340,501 380,497 440,495 480,505 570,505 592,496 640,514 680,521 735,525 755,537 820,542 838,545',
  b: '0,1024 40,1022 55,1012 98,1014 108,970 118,890 140,825 165,792 195,768 218,788 238,742 256,615 275,608 299,578 312,618 328,670 345,710 362,740 400,758 406,700 413,560 421,480 432,440 448,428 463,406 480,428 500,480 515,520 530,575 542,608 572,636 598,568 625,602 636,584 660,604 676,650 688,682 712,684 738,710 765,732 795,718 830,742 845,704 890,696 930,688 955,720 975,736 1010,718 1042,735 1070,718 1110,726 1158,711 1200,745 1230,745 1250,770 1270,780 1300,748 1330,733 1360,760 1400,792 1440,820 1480,822 1500,811 1517,815',
  c: '0,692 12,690 50,718 110,765 137,778 190,765 228,748 275,768 300,762 320,780 350,785 370,825 390,860 425,863 448,836 480,852 510,853 540,842 570,845 605,862 640,850 655,812 672,770 695,735 712,688 745,650 760,620 773,608 810,632 828,640 850,590 870,535 890,515 900,440 910,380 922,332 945,320 958,310 975,325 988,380 1010,450 1035,510 1055,590 1085,635 1120,680 1150,660 1178,632 1210,652 1250,660 1270,635 1295,627 1325,680 1360,715 1395,760',
  d: '0,165 25,172 75,185 115,205 150,212 175,225 240,231 290,233 312,225 322,190 338,162 355,182 380,205 440,210 480,218 530,218 570,235 610,237 650,252 680,243 720,262 770,272 820,275 850,284 880,270 908,238'
});
const ema13 = series({
  a: '153,520 240,518 270,503 340,502 380,498 440,496 480,504 570,505 595,498 640,512 680,520 740,524 770,537 820,540 838,541',
  b: '0,1020 12,1024 40,1022 55,1013 100,1016 110,978 120,925 140,860 165,818 195,787 220,790 240,755 258,650 275,632 298,600 312,618 325,655 345,690 365,722 385,742 400,752 408,710 415,600 422,540 435,500 455,460 466,438 485,445 500,480 515,500 522,530 535,560 545,592 560,608 575,618 598,573 625,606 636,584 660,602 672,628 685,660 710,675 735,698 762,720 795,718 830,738 845,708 880,702 930,692 955,718 980,725 1010,720 1040,733 1070,719 1110,724 1160,718 1195,736 1230,742 1250,765 1270,772 1300,748 1330,737 1360,758 1400,788 1440,815 1480,821 1500,812 1517,815',
  c: '0,692 12,690 50,715 110,760 140,770 190,765 225,752 270,762 300,762 320,778 350,783 370,808 395,848 425,860 448,836 480,852 510,852 540,843 570,845 600,860 640,850 660,820 675,785 700,742 720,700 750,662 770,628 810,628 828,645 850,600 870,555 893,532 900,470 908,450 920,385 940,352 960,334 975,338 988,370 1000,392 1015,440 1040,495 1050,535 1065,578 1085,610 1120,662 1150,652 1178,628 1210,650 1250,656 1270,635 1295,633 1325,670 1360,705 1398,748',
  d: '0,150 25,170 75,183 115,203 150,208 175,222 240,230 290,233 315,225 325,195 345,180 380,202 440,208 480,216 530,215 570,232 610,235 650,248 680,243 720,258 770,268 820,272 850,280 880,276 908,252'
});
const ema200 = series({
  a: '153,513 240,513 270,506 640,508 740,510 800,515 838,515',
  b: '0,991 80,991 100,997 150,978 200,960 230,950 262,926 310,900 350,888 405,874 425,850 455,827 490,800 525,786 570,775 610,762 650,748 690,744 770,742 800,738 860,738 930,731 1230,731 1340,737 1410,742 1480,752 1510,756',
  c: '0,637 30,638 100,652 180,668 250,674 310,687 370,697 430,713 500,726 570,738 610,747 650,752 700,748 750,741 800,729 840,725 890,706 930,682 960,662 990,647 1045,638 1060,643 1310,643 1390,655',
  d: '0,58 50,66 120,82 200,97 250,108 310,118 355,118 420,128 500,138 580,149 680,162 760,175 830,187 890,192 908,197'
});
const ema65 = series({
  a: '153,520 240,520 260,514 320,512 370,507 640,506 700,512 760,514 800,520 838,526',
  b: '0,1000 10,1006 100,1006 120,987 150,952 180,925 210,902 240,878 262,835 285,808 310,775 340,766 405,766 425,710 450,670 465,646 485,624 510,611 540,613 572,621 600,610 665,610 700,628 740,645 775,662 805,667 835,682 880,683 945,686 985,698 1040,708 1100,711 1180,713 1230,722 1265,736 1350,737 1400,748 1440,765 1480,780 1515,785',
  c: '0,663 45,673 80,683 110,700 150,714 190,722 240,727 300,738 360,752 400,778 440,790 490,805 540,812 580,820 620,826 655,826 690,806 720,790 745,770 780,737 820,722 850,698 890,664 920,604 960,550 990,529 1040,529 1070,548 1115,578 1150,590 1190,594 1225,606 1300,616 1355,638 1398,664',
  d: '0,67 40,88 80,107 120,127 170,148 230,168 280,180 315,188 340,178 380,183 440,190 500,199 560,206 620,213 680,224 740,235 800,243 850,252 908,254'
});
for (const [pts, stroke] of [[ema9, '#ffa800'], [ema13, '#ff00ff'], [ema200, '#ff8040'], [ema65, '#3040ff']])
  add('price', 'path', { d: line(pts), stroke, 'stroke-width': 3, fill: 'none', 'stroke-linejoin': 'round' });

const oval = (id, cx, cy, rx, ry) => add(id, 'ellipse', { cx, cy, rx, ry, fill: 'none', stroke: '#f00', 'stroke-width': 1.4 });
oval('price', 317.5, 688.5, 20, 40);
oval('price', 1130, 664.5, 22, 40);
oval('price', 1690, 678, 21.5, 39.5);

/* MACD */
const slow = series({
  m: '27,298 60,298 100,292 130,290 200,288 290,288 360,290 470,290 520,297 560,297 600,305 690,307 710,280 740,250 790,210 815,200 835,180 855,150 880,130 900,122 930,125 955,135 990,153 1010,108 1030,85 1060,60 1075,55 1100,62 1125,82 1150,105 1200,118 1240,138 1270,168',
  n: '0,170 40,200 75,230 145,260 200,265 250,272 310,287 400,292 500,295 560,316 600,310 680,310 720,320 760,335 840,340 890,345 940,362 1060,362 1150,362 1185,380 1240,382 1265,388',
  o: '0,380 130,380 155,372 180,350 210,325 240,305 290,268 340,257 370,235 395,205 418,205 425,175 440,155 465,130 490,112 505,104 535,112 570,130 600,162 625,182 655,212 690,228 740,242 800,262 850,266 900,290 940,308 955,320',
  d: '0,835 40,855 100,870 150,883 220,892 315,892 325,882 380,878 440,873 505,866 700,866 880,866 900,858 908,855'
});
const slowSignal = series({
  m: '27,296 60,295 200,290 470,290 540,294 600,300 690,302 740,290 780,270 820,250 860,225 890,200 930,180 990,165 1010,160 1040,143 1080,118 1120,104 1190,104 1250,115 1270,122',
  n: '0,124 60,150 110,178 160,205 230,233 300,252 370,270 440,285 510,290 560,295 640,300 700,312 770,318 840,325 890,335 950,347 1020,355 1120,356 1200,368 1260,375',
  o: '0,375 60,380 150,380 200,368 250,355 310,328 360,303 420,275 480,232 520,200 560,180 610,172 660,180 720,192 780,208 850,230 900,242 950,265',
  d: '0,777 50,795 100,820 170,840 230,858 270,868 330,871 380,877 440,873 510,872 680,870 750,866 908,862'
});
const fast = series({
  m: '27,284 55,284 60,290 90,284 125,276 140,282 200,286 270,281 290,295 350,292 385,286 420,300 510,303 540,303 600,292 640,286 690,288 698,240 708,190 732,165 750,180 775,195 808,242 830,215 846,142 860,165 888,180 900,220 912,285 925,310 945,335 962,344 988,332 1000,180 1010,100 1025,96 1035,135 1050,142 1070,200 1100,290 1120,350 1138,370 1163,350 1185,282 1213,315 1222,292 1250,310 1270,350',
  n: '2,352 10,342 80,342 95,315 145,318 155,283 235,275 250,292 288,315 320,295 350,300 380,283 400,295 440,290 465,280 500,298 535,300 575,320 610,285 645,276 665,290 700,305 740,325 775,318 810,298 845,295 880,315 930,328 960,322 1013,285 1060,297 1090,293 1130,305 1160,340 1190,345 1225,300 1265,302',
  o: '0,302 40,290 110,300 145,285 165,250 180,225 230,193 275,195 290,205 315,240 340,270 365,240 390,203 418,205 425,150 448,110 465,130 490,155 505,190 520,255 540,315 570,370 597,415 625,402 655,395 680,355 705,312 725,302 750,316 800,308 815,287 845,280 870,315 910,338 955,345',
  d: '0,855 35,852 100,832 180,826 240,812 300,808 315,800 322,772 338,757 355,775 375,795 430,805 460,808 530,803 560,810 655,817 665,808 735,810 745,817 780,815 800,808 845,813 880,800 908,775'
});
function valueAt(pts, x) {
  let i = 1;
  while (i < pts.length - 1 && pts[i][0] < x) i++;
  const [x0, y0] = pts[i - 1], [x1, y1] = pts[i];
  return y0 + (y1 - y0) * (x - x0) / (x1 - x0);
}
function sample(pts) {
  const out = [];
  for (let x = 51; x <= 1702; x++) out.push([x, valueAt(pts, x)]);
  return out;
}
function smooth(pts, k) {
  let v = pts[0][1];
  return pts.map(([x, y]) => [x, v += (y - v) * k]);
}
function band(main, signal) {
  let up = '', down = '';
  main.forEach(([x, y], i) => {
    const s = signal[i][1];
    if (y < s) up += `M${x} ${y.toFixed(1)}V${s.toFixed(1)}`;
    else down += `M${x} ${s.toFixed(1)}V${y.toFixed(1)}`;
  });
  add('macd', 'path', { d: up, stroke: 'url(#gUp)', 'stroke-width': 1.2 });
  add('macd', 'path', { d: down, stroke: 'url(#gDown)', 'stroke-width': 1.2 });
  add('macd', 'path', { d: line(signal), stroke: '#dc6464', 'stroke-width': 1.4, fill: 'none' });
  add('macd', 'path', { d: line(main), stroke: '#3030d8', 'stroke-width': 1.4, fill: 'none' });
}
const fastLine = sample(fast);
band(sample(slow), sample(slowSignal));
band(fastLine, smooth(fastLine, 0.14));
add('macd', 'path', { d: 'M51 866.5H1835', stroke: '#3030d8' });
add('macd', 'path', { d: 'M316.5 780V920M1128.5 780V920M1683.5 780V920', stroke: '#000' });
oval('macd', 318, 864.5, 15, 33);
oval('macd', 1128.5, 878.5, 15, 33);
oval('macd', 1687.5, 877.5, 15, 32);

/* volume: x, top */
const volume = {
  up: {
    m: '36,612 85,612 117,603 124,612 271,612 292,612 301,609 316,612 629,603 646,603 676,609 830,612 843,612 992,612 997,603',
    o: '37,612 45,612 57,612 84,609 120,612 142,603 147,573 156,612 162,555 174,555 189,576 195,603 201,555 207,590 216,573 219,555 228,603 240,590 255,606 261,595 267,600 273,585 282,603 300,612 312,603 324,600 342,603 350,600 360,537 372,590 378,594 390,600 411,600 423,477 435,549 444,582 462,590 471,591 483,600 522,585 543,609 550,600 567,609 593,609 600,603 607,603 624,612 633,600 648,609 666,609 675,591 684,603 693,573 702,582 710,600 729,603 747,603 758,603 774,612 790,612 803,573 809,590 819,582 825,600 830,585 836,600 858,603 866,609 885,612 915,603 921,594 940,606 950,609 975,612 990,612 1010,609 1017,609 1054,612 1065,609 1080,612 1107,612 1117,609 1124,600 1133,609 1174,612 1182,612 1190,612 1205,612 1272,600 1281,585 1324,612 1368,612',
    d: '28,1122 57,1120 75,1122 90,1122 117,1122 155,1120 165,1110 174,1120 213,1122 228,1122 240,1122 313,1110 321,1095 363,1122 372,1119 415,1122 445,1120 475,1120 497,1119 507,1113 552,1110 572,1122 662,1122 723,1119 777,1122 831,1110 849,1113 859,1122 868,1122 877,1113 888,1047 894,1092 903,1083 907,1092'
  },
  down: {
    m: '44,612 365,612 787,612 1005,609 1014,612 1521,612',
    n: '1149,612',
    o: '30,609 75,612 169,609 180,510 234,612 246,573 252,603 277,603 291,600 306,609 318,606 333,582 363,597 399,609 405,590 417,603 432,465 450,546 459,540 477,603 488,591 495,603 507,522 516,564 530,603 535,603 560,591 575,600 580,600 588,603 615,609 620,609 643,609 660,603 690,606 720,585 727,603 735,603 740,603 763,609 798,609 849,576 876,603 930,600 936,600 958,609 965,609 983,609 1002,594 1037,612 1102,612 1112,609 1290,591 1305,582 1332,609 1350,609',
    d: '5,1119 42,1104 48,1120 142,1122 330,1101 345,1092 390,1120 462,1113 452,1120 515,1119 563,1122 615,1119 735,1113 759,1122 842,1119'
  }
};
for (const side in volume) {
  let d = '';
  for (const f in volume[side]) for (const t of volume[side][f].split(' ')) {
    const [x, y] = t.split(',').map(Number);
    d += `M${Math.round(px(f, x))} ${py(f, y).toFixed(0)}V976`;
  }
  add('volume', 'path', { d, stroke: side === 'up' ? GREEN : RED, 'stroke-width': 2 });
}
```
